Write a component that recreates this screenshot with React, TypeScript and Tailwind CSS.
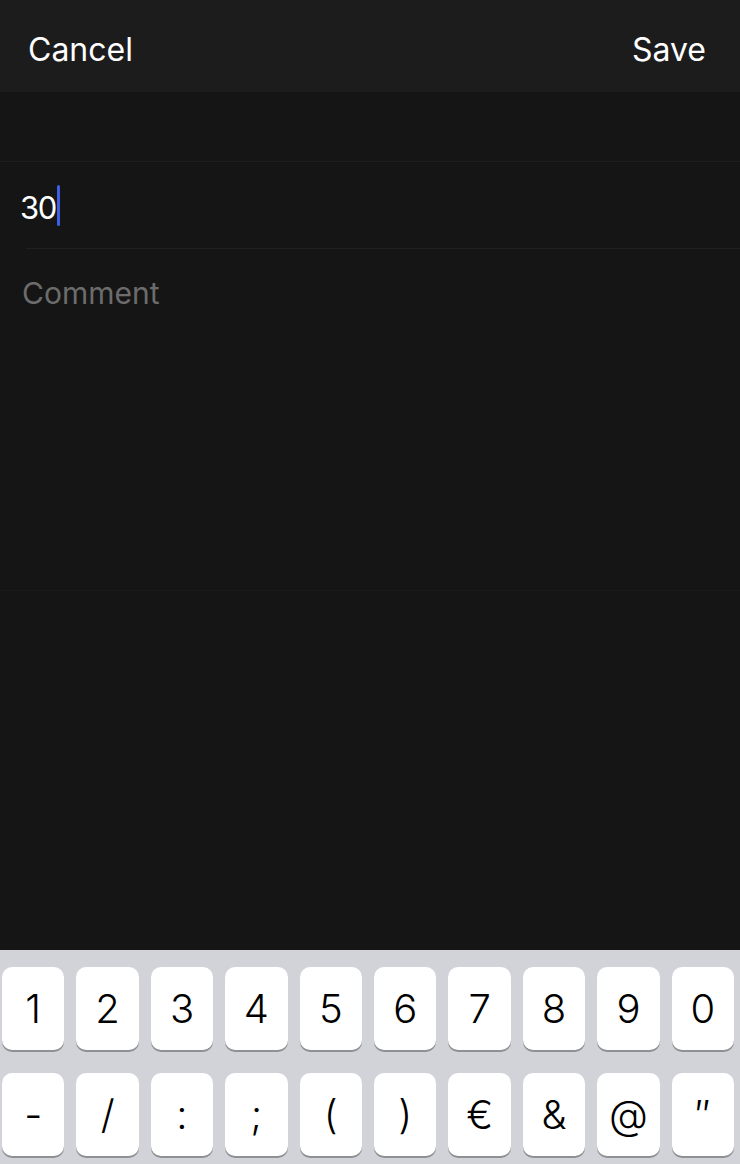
import React from "react";

const ROW1 = ["1", "2", "3", "4", "5", "6", "7", "8", "9", "0"];
const ROW2 = ["-", "/", ":", ";", "(", ")", "€", "&", "@", "″"];

function KeyRow({ keys }: { keys: string[] }) {
  return (
    <div className="flex h-[83px] gap-[12px]">
      {keys.map((k) => (
        <div
          key={k}
          className="flex flex-1 items-center justify-center rounded-[10px] bg-white text-[40px] font-light text-black shadow-[0_2px_0_#8e9094]"
        >
          {k}
        </div>
      ))}
    </div>
  );
}

export default function App() {
  return (
    <div className="flex h-[1164px] w-[740px] flex-col overflow-hidden bg-[#151515] font-['Inter',sans-serif]">
      {/* Nav bar */}
      <div className="flex h-[92px] shrink-0 items-center justify-between bg-[#1c1c1c] pl-[28px] pr-[34px] pt-[7px] text-[32px] text-white">
        <span>Cancel</span>
        <span>Save</span>
      </div>

      <div className="h-[69px] shrink-0" />

      {/* Amount field */}
      <div className="flex h-[87px] shrink-0 items-center border-t border-[#1d1d1d] pl-[20px] text-[31px] text-white">
        <span className="pt-[6px] tracking-[-1.5px]">30</span>
        <span className="ml-[1px] h-[41px] w-[3px] rounded-full bg-[#3d5fe8]" />
      </div>
      <div className="ml-[26px] h-px shrink-0 bg-[#202020]" />

      {/* Comment */}
      <div className="h-[341px] shrink-0 pl-[22px] pt-[26px] text-[30px] leading-[36px] text-[#6c6c6c]">
        Comment
      </div>
      <div className="h-px shrink-0 bg-[#1b1b1b]" />

      <div className="flex-1" />

      {/* Keyboard */}
      <div className="flex h-[214px] shrink-0 flex-col gap-[23px] bg-[#d1d3d9] pl-[2px] pr-[6px] pt-[17px]">
        <KeyRow keys={ROW1} />
        <KeyRow keys={ROW2} />
      </div>
    </div>
  );
}
